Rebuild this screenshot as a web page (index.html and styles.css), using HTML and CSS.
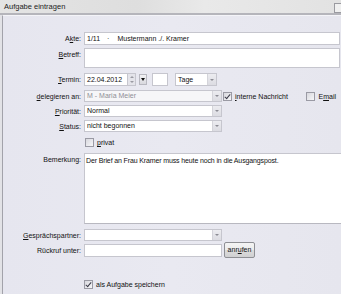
FILE: index.html
```html
<!DOCTYPE html>
<html lang="de">
<head>
    <meta charset="UTF-8">
    <title>Aufgabe eintragen</title>
    <link rel="stylesheet" href="styles.css">
</head>
<body>
    <div class="titlebar">
        Aufgabe eintragen
        <span class="ctrl"></span>
    </div>
    <div class="window">
        <div class="row r-akte">
            <div class="lbl">A<u>k</u>te:</div>
            <div class="field wide">1/11<span class="sp1">·</span><span class="sp2">Mustermann ./. Kramer</span></div>
        </div>
        <div class="row r-betreff">
            <div class="lbl top"><u>B</u>etreff:</div>
            <div class="field wide tall"></div>
        </div>
        <div class="row r-termin">
            <div class="lbl"><u>T</u>ermin:</div>
            <div class="field date">22.04.2012</div>
            <div class="spin"><span class="up"></span><span class="down"></span></div>
            <div class="dropbtn"><span class="tri"></span></div>
            <div class="field small"></div>
            <div class="field select tage">Tage<span class="arrow"></span></div>
        </div>
        <div class="row r-deleg">
            <div class="lbl"><u>d</u>elegieren an:</div>
            <div class="field select disabled">M - Maria Meier<span class="arrow"></span></div>
            <label class="check first"><span class="box on"></span><u>i</u>nterne Nachricht</label>
            <label class="check right"><span class="box"></span>E<u>m</u>ail</label>
        </div>
        <div class="row r-prio">
            <div class="lbl"><u>P</u>riorität:</div>
            <div class="field select">Normal<span class="arrow"></span></div>
        </div>
        <div class="row r-status">
            <div class="lbl"><u>S</u>tatus:</div>
            <div class="field select">nicht begonnen<span class="arrow"></span></div>
        </div>
        <div class="row r-privat">
            <div class="lbl"></div>
            <label class="check"><span class="box"></span><u>p</u>rivat</label>
        </div>
        <div class="row r-bem">
            <div class="lbl top">Bemerkung:</div>
            <div class="field memo">Der Brief an Frau Kramer muss heute noch in die Ausgangspost.</div>
        </div>
        <div class="row r-gesp">
            <div class="lbl"><u>G</u>esprächspartner:</div>
            <div class="field select"><span class="arrow"></span></div>
        </div>
        <div class="row r-ruf">
            <div class="lbl">Rückruf unter:</div>
            <div class="field phone"></div>
            <div class="btn">anr<u>u</u>fen</div>
        </div>
        <div class="row r-save">
            <div class="lbl"></div>
            <label class="check"><span class="box on"></span>als Aufgabe speichern</label>
        </div>
    </div>
</body>
</html>
```

FILE: styles.css
```css
body {
    margin: 0;
    width: 341px;
    height: 294px;
    overflow: hidden;
    font-family: "Liberation Sans", Arial, sans-serif;
    font-size: 7px;
    color: #111;
    background: #e2e2e6;
}
u {
    text-decoration: underline;
    text-underline-offset: 1px;
}
.titlebar {
    position: relative;
    height: 13px;
    line-height: 13px;
    padding-left: 4px;
    font-size: 7.5px;
    color: #222;
    background: linear-gradient(90deg, #e4e4e4 0%, #dedede 40%, #e9e9e9 60%, #e2e2e2 100%);
    border-bottom: 2px solid #b5b5bb;
}
.ctrl {
    position: absolute;
    right: 0;
    top: 3px;
    width: 6px;
    height: 8px;
    border: 1px solid #9a9aa0;
    border-right: none;
    background: #f0f0f0;
}
.window {
    margin-left: 2px;
    height: 279px;
    padding-top: 16px;
    box-sizing: border-box;
    border-left: 1px solid #a2a2aa;
    border-top: 1px solid #f4f4f8;
    background: linear-gradient(90deg, #e6e6ef 0%, #e9e9f1 50%, #e6e6ee 100%);
}
.row {
    display: flex;
    align-items: center;
}
.lbl {
    flex: 0 0 78px;
    margin-right: 3px;
    text-align: right;
    white-space: nowrap;
}
.lbl.top {
    align-self: flex-start;
    padding-top: 3px;
}
.field {
    position: relative;
    box-sizing: border-box;
    height: 12px;
    line-height: 10px;
    padding-left: 2px;
    background: #fff;
    border: 1px solid #c6c6ce;
    white-space: nowrap;
    overflow: hidden;
}
.wide {
    flex: 1;
    margin-right: 1px;
}
.r-akte .field {
    height: 13px;
    line-height: 11px;
}
.sp1 {
    margin-left: 7px;
}
.sp2 {
    margin-left: 8px;
}
.r-betreff {
    margin-top: 3px;
}
.tall {
    height: 20px;
}
.r-termin {
    margin-top: 5px;
}
.r-termin .field {
    height: 13px;
    line-height: 11px;
}
.date {
    width: 44px;
}
.spin {
    display: flex;
    flex-direction: column;
    justify-content: space-between;
    box-sizing: border-box;
    width: 8px;
    height: 13px;
    padding: 2px 1px;
    background: #e4e4ea;
    border: 1px solid #c6c6ce;
    border-left: none;
}
.spin span {
    align-self: center;
    width: 0;
    height: 0;
    border-left: 2px solid transparent;
    border-right: 2px solid transparent;
}
.spin .up {
    border-bottom: 2px solid #9a9aa2;
}
.spin .down {
    border-top: 2px solid #9a9aa2;
}
.dropbtn {
    display: flex;
    align-items: center;
    justify-content: center;
    box-sizing: border-box;
    width: 8px;
    height: 11px;
    margin-left: 3px;
    background: linear-gradient(#f2f2f4, #d8d8de);
    border: 1px solid #b8b8c0;
}
.tri {
    width: 0;
    height: 0;
    border-left: 2px solid transparent;
    border-right: 2px solid transparent;
    border-top: 3px solid #111;
}
.small {
    width: 16px;
    margin-left: 5px;
}
.select {
    width: 138px;
}
.tage {
    width: 42px;
    margin-left: 7px;
}
.arrow {
    position: absolute;
    top: 0;
    right: 0;
    bottom: 0;
    width: 8px;
    background: linear-gradient(#ececf0, #dcdce2);
    border-left: 1px solid #d4d4da;
}
.arrow::after {
    content: "";
    position: absolute;
    left: 2px;
    top: 50%;
    margin-top: -1px;
    border-left: 2px solid transparent;
    border-right: 2px solid transparent;
    border-top: 2px solid #8c8c94;
}
.disabled {
    color: #8f8f96;
    background: #f6f6f8;
}
.r-deleg {
    margin-top: 4px;
    padding-right: 5px;
}
.check {
    display: inline-flex;
    align-items: center;
    white-space: nowrap;
}
.check.first {
    margin-left: 1px;
}
.check.right {
    margin-left: auto;
}
.box {
    position: relative;
    box-sizing: border-box;
    width: 9px;
    height: 9px;
    margin-right: 3px;
    border: 1px solid #9a9aa4;
    background: linear-gradient(135deg, #d8d8de, #f6f6f8);
}
.box.on::after {
    content: "";
    position: absolute;
    left: 2px;
    top: 0;
    width: 2px;
    height: 5px;
    border-right: 1px solid #3a3a48;
    border-bottom: 1px solid #3a3a48;
    transform: rotate(40deg);
}
.r-prio {
    margin-top: 3px;
}
.r-status {
    margin-top: 3px;
}
.r-privat {
    margin-top: 6px;
}
.r-privat .check {
    margin-left: 1px;
}
.r-bem {
    margin-top: 6px;
}
.memo {
    flex: 1;
    height: 71px;
    padding: 3px 1px;
    line-height: 8px;
    letter-spacing: -0.13px;
    border-right: none;
    border-bottom-color: #b8b8c0;
}
.r-gesp {
    margin-top: 5px;
}
.r-ruf {
    margin-top: 1px;
}
.phone {
    width: 138px;
    height: 13px;
}
.btn {
    box-sizing: border-box;
    width: 31px;
    height: 16px;
    margin-left: 2px;
    line-height: 14px;
    text-align: center;
    border: 1px solid #8e8f94;
    border-radius: 2px;
    background: linear-gradient(#f4f4f4 0%, #ebebeb 50%, #dcdcdc 51%, #d0d0d2 100%);
}
.r-save {
    margin-top: 22px;
}
```
